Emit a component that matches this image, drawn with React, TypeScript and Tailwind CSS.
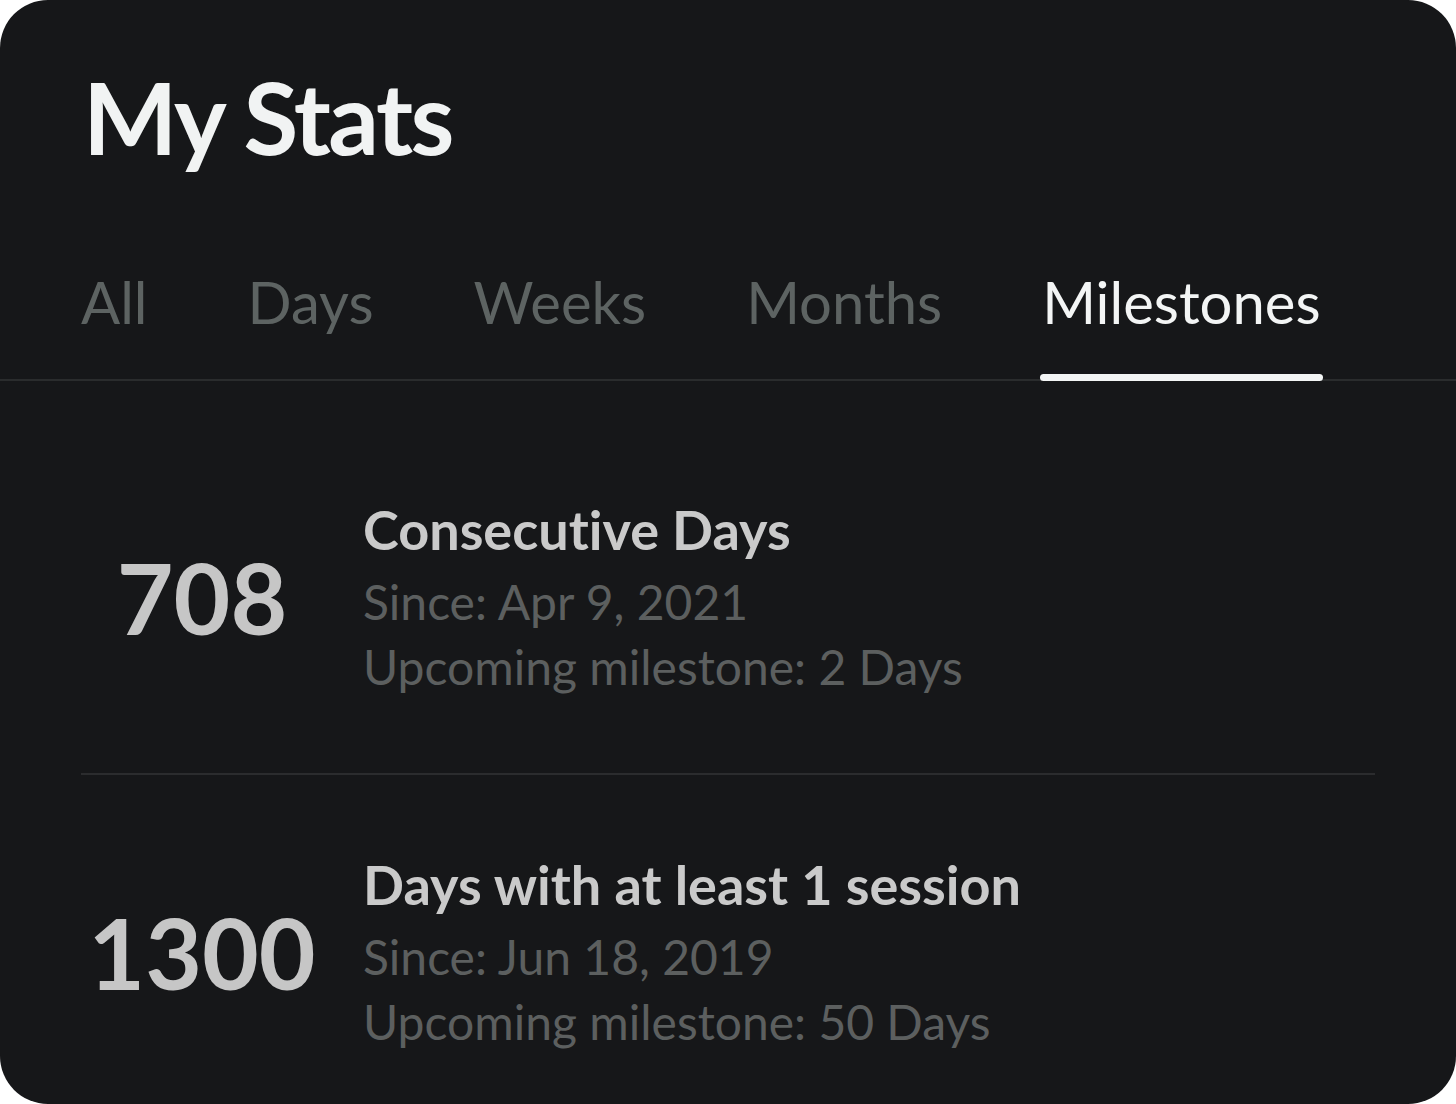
const TABS = ["All", "Days", "Weeks", "Months", "Milestones"];
const ACTIVE_TAB = "Milestones";

type Milestone = {
  value: string;
  title: string;
  since: string;
  upcoming: string;
};

const MILESTONES: Milestone[] = [
  {
    value: "708",
    title: "Consecutive Days",
    since: "Since: Apr 9, 2021",
    upcoming: "Upcoming milestone: 2 Days",
  },
  {
    value: "1300",
    title: "Days with at least 1 session",
    since: "Since: Jun 18, 2019",
    upcoming: "Upcoming milestone: 50 Days",
  },
];

function MilestoneRow({ item }: { item: Milestone }) {
  return (
    <div className="flex items-center">
      <div className="w-[242px] shrink-0 text-center text-[98px] font-bold leading-none text-[#c6c6c6]">
        {item.value}
      </div>
      <div className="ml-[40px] flex flex-col">
        <p className="text-[54px] font-bold leading-none text-[#cacaca]">{item.title}</p>
        <p className="mt-[21px] text-[48px] leading-none text-[#5c5f5f]">{item.since}</p>
        <p className="mt-[17px] text-[48px] leading-none text-[#5c5f5f]">{item.upcoming}</p>
      </div>
    </div>
  );
}

export default function App() {
  return (
    <div
      className="min-h-screen bg-white [font-variant-ligatures:none]"
      style={{ fontFamily: "Lato, 'Noto Sans', sans-serif" }}
    >
      <div className="w-[1456px] h-[1104px] overflow-hidden rounded-[48px] bg-[#161719]">
        <h1 className="pl-[83px] pt-[66px] text-[100px] font-bold leading-none tracking-[-2.5px] text-[#f1f3f3]">
          My Stats
        </h1>

        <nav className="relative mt-[107px] flex gap-[100px] border-b-2 border-[#2a2c2d] pl-[81px]">
          {TABS.map((tab) => {
            const active = tab === ACTIVE_TAB;
            return (
              <div
                key={tab}
                className={`relative pb-[48px] text-[58px] leading-none ${
                  active ? "text-[#f3f5f5]" : "text-[#5d6362]"
                }`}
              >
                {tab}
                {active && (
                  <span className="absolute -bottom-[2px] -left-[2px] -right-[2px] h-[7px] rounded-full bg-[#f3f5f5]" />
                )}
              </div>
            );
          })}
        </nav>

        <div className="px-[81px]">
          <div className="pt-[122px] pb-[82px]">
            <MilestoneRow item={MILESTONES[0]} />
          </div>
          <div className="h-[2px] w-[1294px] bg-[#2b2c2e]" />
          <div className="pt-[83px]">
            <MilestoneRow item={MILESTONES[1]} />
          </div>
        </div>
      </div>
    </div>
  );
}
